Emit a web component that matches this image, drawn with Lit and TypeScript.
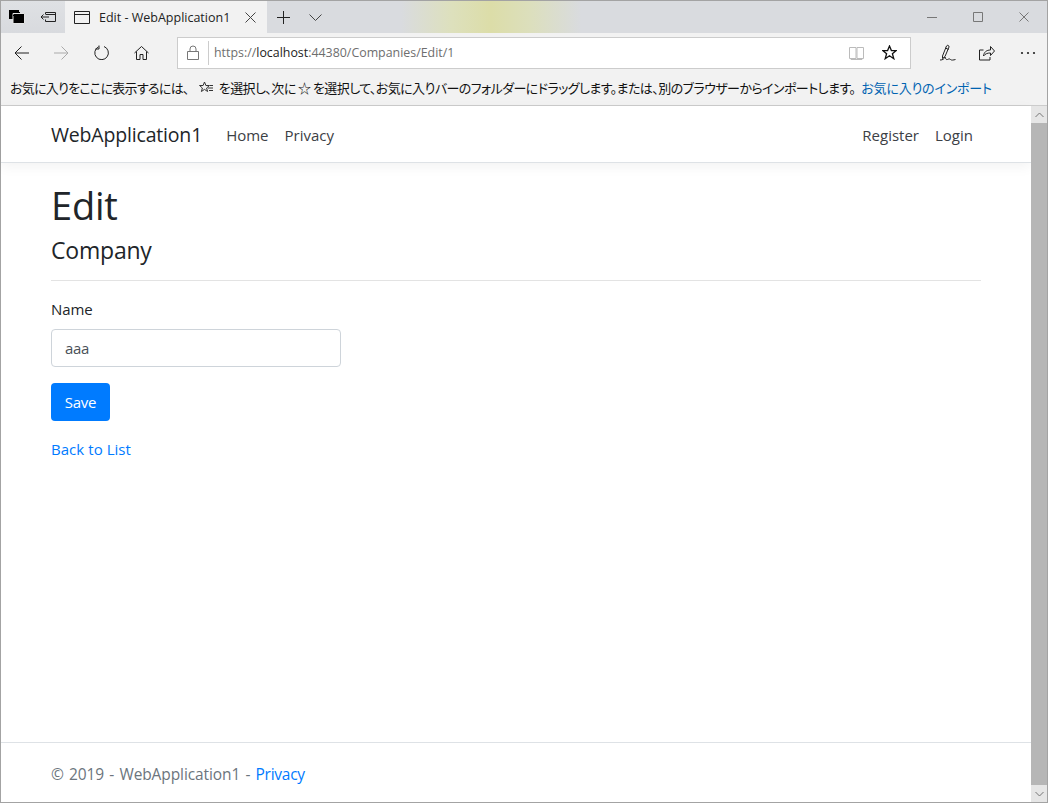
import { LitElement, html, css, svg } from "lit";
import { customElement } from "lit/decorators.js";

const ic = (w: number, h: number, body: unknown, cls = "") =>
  html`<svg class="ic ${cls}" width=${w} height=${h} viewBox="0 0 ${w} ${h}" fill="none" stroke="currentColor" stroke-width="1">${body}</svg>`;

@customElement("app-root")
export class AppRoot extends LitElement {
  static styles = css`
    :host { display: block; width: 1048px; height: 803px; overflow: hidden; font-family: "Open Sans", "Noto Sans", sans-serif; color: #212529; }
    * { box-sizing: border-box; }
    .win { height: 803px; border: 1px solid #a3a3a3; display: flex; flex-direction: column; background: #fff; }
    .ic { display: block; flex: none; }
    .tabs { height: 32px; display: flex; align-items: stretch; color: #222;
      background: linear-gradient(90deg, #d9dbdf 0, #d9dbdf 400px, #dde0bd 450px, #dcdda8 490px, #dcdfbd 530px, #d9dbdf 580px, #d9dbdf 100%); }
    .tabtools { width: 64px; display: flex; align-items: center; background: linear-gradient(180deg, #dfe1e4, #d8dade); padding-left: 8px; gap: 15px; }
    .tab { width: 202px; background: #f2f2f2; display: flex; align-items: center; padding-left: 9px; font-size: 12.5px; }
    .tab span { margin-left: 9px; width: 146px; white-space: nowrap; }
    .tabx { color: #444; }
    .tabmore { display: flex; align-items: center; }
    .plus { margin-left: 10px; }
    .chev { margin-left: 19px; color: #444; }
    .spring { flex: 1; }
    .winctl { display: flex; align-items: center; gap: 36px; padding-right: 18px; color: #777; }
    .toolbar { height: 37px; padding-top: 2px; background: #f2f2f2; display: flex; align-items: center; padding-left: 13px; color: #222; }
    .nav-ic { width: 40px; display: flex; }
    .nav-home { width: 43px; }
    .fwd { color: #aaa; }
    .addr { width: 734px; height: 32px; background: #fff; border: 1px solid #ccc; display: flex; align-items: center; padding-left: 9px; font-size: 12.4px; color: #6e6e6e; }
    .lock { color: #777; }
    .sep { width: 1px; height: 24px; background: #ccc; margin: 0 5px 0 9px; }
    .url b { font-weight: 400; color: #222; }
    .book { margin-left: auto; color: #bbb; margin-right: 18px; }
    .star { color: #111; margin-right: 13px; }
    .rtools { display: flex; align-items: center; margin-left: 29px; gap: 23px; color: #222; }
    .dots { margin-left: 2px; }
    .fav { height: 36px; background: #f2f2f2; border-bottom: 1px solid #ccc; display: flex; align-items: center; padding-left: 9px; font-family: "Noto Sans CJK JP", sans-serif; font-size: 13px; font-feature-settings: "palt"; white-space: nowrap; color: #111; }
    .fav-a { letter-spacing: -0.72px; }
    .fav-b { letter-spacing: -0.57px; }
    .fav svg { margin: 0 5px 0 10px; color: #333; }
    .fav a { margin-left: 6px; color: #0063b1; letter-spacing: -0.2px; }
    .body { flex: 1; display: flex; min-height: 0; }
    .page { flex: 1; display: flex; flex-direction: column; min-width: 0; }
    .sb { width: 16px; background: #b6b6b6; display: flex; flex-direction: column; justify-content: space-between; }
    .sbb { height: 17px; background: #e6e6e6; display: flex; align-items: center; justify-content: center; color: #777; }
    nav { height: 57px; padding: 1px 58px 0 50px; border-bottom: 1px solid #dee2e6; box-shadow: 0 4px 12px rgba(0,0,0,.05); display: flex; align-items: center; font-size: 15px; color: #3c4045; }
    .brand { font-size: 19.5px; letter-spacing: -0.18px; color: #212529; margin-right: 8px; }
    nav a + a { margin-left: 16px; }
    .main { flex: 1; padding: 18px 50px 0; }
    h1 { margin: 0; font-size: 38px; line-height: 48px; font-weight: 400; letter-spacing: -0.2px; }
    h4 { margin: 7px 0 0; font-size: 23px; line-height: 29px; font-weight: 400; letter-spacing: -0.2px; }
    hr { border: 0; border-top: 1px solid #e3e3e3; margin: 15px 0 0; }
    label { display: block; margin-top: 16px; font-size: 15px; line-height: 24px; letter-spacing: -0.05px; }
    .input { margin-top: 8px; width: 290px; height: 38px; border: 1px solid #ced4da; border-radius: 4px; display: flex; align-items: center; padding-left: 13px; font-size: 15px; color: #495057; letter-spacing: -0.3px; }
    .btn { margin-top: 16px; width: 59px; height: 38px; border-radius: 4px; background: #007bff; color: #fff; display: flex; align-items: center; justify-content: center; font-size: 15px; letter-spacing: -0.2px; }
    .back { display: block; margin-top: 16px; font-size: 15px; line-height: 24px; letter-spacing: 0.05px; color: #007bff; }
    footer { height: 60px; padding: 2px 0 0 50px; border-top: 1px solid #dee2e6; display: flex; align-items: center; font-size: 15.5px; letter-spacing: -0.1px; word-spacing: 1.3px; color: #6c757d; white-space: pre; }
    footer a { color: #007bff; letter-spacing: -0.25px; }
  `;

  render() {
    return html`<div class="win">
      <div class="tabs">
        <div class="tabtools">
          ${ic(16, 14, svg`<path d="M0 0h10v2H0zM0 2h11v7H0z" fill="#000" stroke="none"/><path d="M4 3.500h11.500v10H4z" fill="#000" stroke="#e4e4e4"/><path d="M4 5h11v1H4z" fill="#000" stroke="none"/>`)}
          ${ic(17, 14, svg`<path d="M5.500 4V2.500h10v9h-10V9.500M5.500 4.500h10M1 7h8M3.500 4.500L1 7l2.500 2.500"/>`)}
        </div>
        <div class="tab">
          ${ic(16, 13, svg`<path d="M.5.500h15v12H.5zM.5 3.500h15"/>`)}
          <span>Edit - WebApplication1</span>
          ${ic(11, 11, svg`<path d="M.5.500l10 10M10.500.500l-10 10"/>`, "tabx")}
        </div>
        <div class="tabmore">
          ${ic(13, 13, svg`<path d="M6.500 0v13M0 6.500h13"/>`, "plus")}
          ${ic(13, 7, svg`<path d="M.5.500l6 6 6-6"/>`, "chev")}
        </div>
        <div class="spring"></div>
        <div class="winctl">
          ${ic(10, 10, svg`<path d="M0 5.500h10"/>`)}
          ${ic(10, 10, svg`<path d="M.5.500h9v9h-9z"/>`)}
          ${ic(10, 10, svg`<path d="M.5.500l9 9M9.500.500l-9 9"/>`)}
        </div>
      </div>
      <div class="toolbar">
        <div class="nav-ic">${ic(15, 14, svg`<path d="M15 7H1M7.500.500L1 7l6.500 6.500"/>`)}</div>
        <div class="nav-ic fwd">${ic(15, 14, svg`<path d="M0 7h14M7.500.500L14 7l-6.500 6.500"/>`)}</div>
        <div class="nav-ic">${ic(15, 15, svg`<path d="M4.500 1.800A6.800 6.800 0 1 0 10 1.500M5 .500v3.500H1.500"/>`)}</div>
        <div class="nav-ic nav-home">${ic(15, 15, svg`<path d="M.5 8L7.500 1.500 14.500 8M2.500 6.500v8h3.500v-5h3v5h3.500v-8"/>`)}</div>
        <div class="addr">
          ${ic(12, 15, svg`<path d="M.5 6.500h11v8H.5zM3 6.500V4a3 3 0 0 1 6 0v2.500"/>`, "lock")}
          <div class="sep"></div>
          <div class="url">https://<b>localhost</b>:44380/Companies/Edit/1</div>
          ${ic(15, 14, svg`<path d="M.5 1.500h6.500v11H.5zM8 1.500h6.500v11H8zM2 12.500v1h11v-1"/>`, "book")}
          ${ic(15, 15, svg`<path d="M7.500 1l1.900 4.600h4.900L10.400 8.700l1.400 5-4.300-2.900-4.300 2.900 1.400-5L.7 5.600h4.900z" stroke-width="1.300"/>`, "star")}
        </div>
        <div class="rtools">
          ${ic(16, 18, svg`<path d="M2.500 12L6.500 2c.6-1.400 3-.5 2.500 1L5 12.500l-2.500 2zM5.500 4l3 1.500M0 16c3 0 4-1 5-3 .5 2 1.500 3 2.500 2.500s2-1 3 0 3 .5 5 0"/>`)}
          ${ic(16, 16, svg`<path d="M11 12v3H.5V5h4M4.500 11c.5-4 3-6 7-6V1.500L15.500 6l-4 4.500V8c-3 0-5 .5-7 3z"/>`)}
          <div class="dots">${ic(16, 4, svg`<circle cx="2" cy="2" r="1.100" fill="currentColor" stroke="none"/><circle cx="8" cy="2" r="1.100" fill="currentColor" stroke="none"/><circle cx="14" cy="2" r="1.100" fill="currentColor" stroke="none"/>`)}</div>
        </div>
      </div>
      <div class="fav">
        <span class="fav-a">お気に入りをここに表示するには、</span>
        ${ic(15, 13, svg`<path d="M5.500 1l1.400 3.500h3.600L7.600 7l1 3.500-3.100-2.100-3.100 2.100 1-3.500L.5 4.500h3.600zM9 7h5M10 9.500h4M11 4.500h3"/>`)}
        <span class="fav-b">を選択し、次に ☆ を選択して、お気に入りバーのフォルダーにドラッグします。または、別のブラウザーからインポートします。</span>
        <a>お気に入りのインポート</a>
      </div>
      <div class="body">
        <div class="page">
          <nav><a class="brand">WebApplication1</a><a>Home</a><a>Privacy</a><span class="spring"></span><a>Register</a><a>Login</a></nav>
          <div class="main">
            <h1>Edit</h1>
            <h4>Company</h4>
            <hr />
            <label>Name</label>
            <div class="input">aaa</div>
            <div class="btn">Save</div>
            <a class="back">Back to List</a>
          </div>
          <footer>© 2019 - WebApplication1 - <a>Privacy</a></footer>
        </div>
        <div class="sb">
          <div class="sbb">${ic(9, 6, svg`<path d="M.5 5l4-4 4 4"/>`)}</div>
          <div class="sbb">${ic(9, 6, svg`<path d="M.5 1l4 4 4-4"/>`)}</div>
        </div>
      </div>
    </div>`;
  }
}
